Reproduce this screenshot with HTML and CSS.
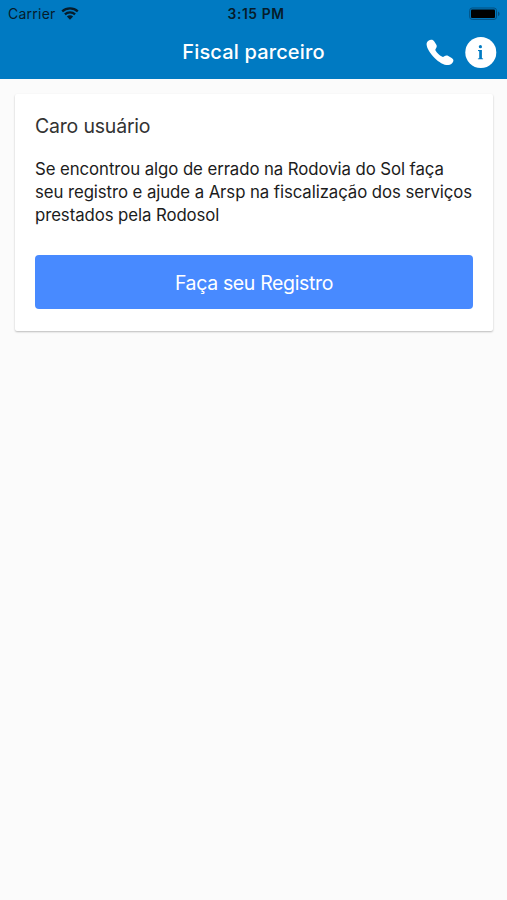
FILE: index.html
```html
<!DOCTYPE html>
<html lang="pt-BR">
<head>
    <meta charset="UTF-8">
    <meta name="viewport" content="width=device-width, initial-scale=1.0">
    <title>Fiscal parceiro</title>
    <link rel="stylesheet" href="styles.css">
</head>
<body>
    <header class="header">
        <div class="status-bar">
            <div class="carrier">
                <span class="carrier-name">Carrier</span>
                <svg class="wifi" width="18" height="13" viewBox="0 0 18 13">
                    <path d="M1.2 4.3C5.6.4 12.4.4 16.8 4.3M3.9 7.4c2.9-2.6 7.3-2.6 10.2 0" fill="none" stroke="#061c2b" stroke-width="2.3"/>
                    <path d="M5.9 9.5c1.800-1.600 4.400-1.600 6.200 0L9 12.700z" fill="#061c2b"/>
                </svg>
            </div>
            <span class="time">3:15 PM</span>
            <svg class="battery" width="32" height="14" viewBox="0 0 32 14">
                <rect x=".7" y="1" width="26.8" height="11.4" rx="2.5" fill="none" stroke="#034f7f" stroke-width="1"/>
                <rect x="2" y="2.5" width="24" height="8.6" rx="1" fill="#000"/>
                <path d="M29 4.5c2 .8 2 3.8 0 4.6z" fill="#034f7f"/>
            </svg>
        </div>
        <div class="toolbar">
            <h1 class="title">Fiscal parceiro</h1>
            <div class="actions">
                <button class="icon-btn" aria-label="Telefone">
                    <svg width="28" height="28" viewBox="0 0 28 28">
                        <path d="M.6 6.500C.4 4 2.600 2 4.900 1.700c1.400-.2 2.500.4 3.400 1.700l1.900 3.100c.9 1.500.6 2.900-.3 4-.7.900-.7 1.500-.2 2.300 1.400 2.300 3.700 4.400 6.200 5.800.9.500 1.500.4 2.400-.3 1.200-1 2.600-1.200 4-.4l3.400 2.100c1.400.9 2 2 1.600 3.300-.7 2.100-2.900 3.700-5 3.800-4.200.200-9.400-2.900-13.700-7.200C4.200 15.600.900 10.500.6 6.500z" fill="#fff"/>
                    </svg>
                </button>
                <button class="icon-btn" aria-label="Sobre">
                    <svg width="32" height="32" viewBox="0 0 32 32">
                        <circle cx="15.8" cy="16.500" r="15.500" fill="#fff"/>
                        <circle cx="15.400" cy="10.700" r="1.600" fill="#007ac2"/>
                        <path d="M13 14h3.900v8.200l1.200.3v.8h-5.200v-.8l1.300-.3v-6.900l-1.200-.4z" fill="#007ac2"/>
                    </svg>
                </button>
            </div>
        </div>
    </header>

    <main class="content">
        <section class="card">
            <h2 class="card-title">Caro usuário</h2>
            <p class="card-text">Se encontrou algo de errado na Rodovia do Sol faça seu registro e ajude a Arsp na fiscalização dos serviços prestados pela Rodosol</p>
            <button class="register-btn">Faça seu Registro</button>
        </section>
    </main>
</body>
</html>
```

FILE: styles.css
```css
* {
    box-sizing: border-box;
}
body {
    margin: 0;
    min-height: 100vh;
    background: #fbfbfb;
    font-family: Inter, "Liberation Sans", sans-serif;
    color: #1c1c1c;
}
button {
    border: none;
    padding: 0;
    font-family: inherit;
    cursor: pointer;
}
.header {
    height: 79px;
    background: #007ac2;
}
.status-bar {
    display: grid;
    grid-template-columns: 1fr auto 1fr;
    align-items: center;
    height: 27px;
    padding: 0 6px 0 11px;
    color: #061c2b;
}
.carrier {
    display: flex;
    align-items: center;
    gap: 5px;
    margin-left: -3px;
}
.carrier-name {
    font-size: 14px;
    letter-spacing: 0.25px;
}
.time {
    font-size: 13.8px;
    font-weight: 600;
    letter-spacing: 0.6px;
}
.battery {
    justify-self: end;
}
.toolbar {
    display: grid;
    grid-template-columns: 1fr auto 1fr;
    align-items: center;
    height: 50px;
    padding: 0 10px;
}
.title {
    grid-column: 2;
    margin: 0;
    font-size: 20px;
    font-weight: 500;
    line-height: 24px;
    letter-spacing: 0.15px;
    color: #fff;
}
.actions {
    display: flex;
    align-items: center;
    justify-content: flex-end;
    gap: 11px;
}
.icon-btn {
    display: flex;
    background: none;
}
.content {
    padding: 15px 14px 15px 15px;
}
.card {
    padding: 20px;
    height: 237px;
    background: #fff;
    border-radius: 2px;
    box-shadow: 0 1px 2px rgba(0, 0, 0, 0.25);
}
.card-title {
    margin: 0 0 19px;
    font-size: 19.5px;
    font-weight: 400;
    line-height: 25px;
    letter-spacing: -0.2px;
    color: #333;
}
.card-text {
    margin: 0 0 28px;
    font-size: 16.8px;
    line-height: 23px;
    letter-spacing: -0.08px;
}
.register-btn {
    display: block;
    width: 100%;
    height: 54px;
    padding-top: 2px;
    border-radius: 4px;
    background: #488aff;
    color: #fff;
    font-size: 19.5px;
    letter-spacing: -0.35px;
}
```
